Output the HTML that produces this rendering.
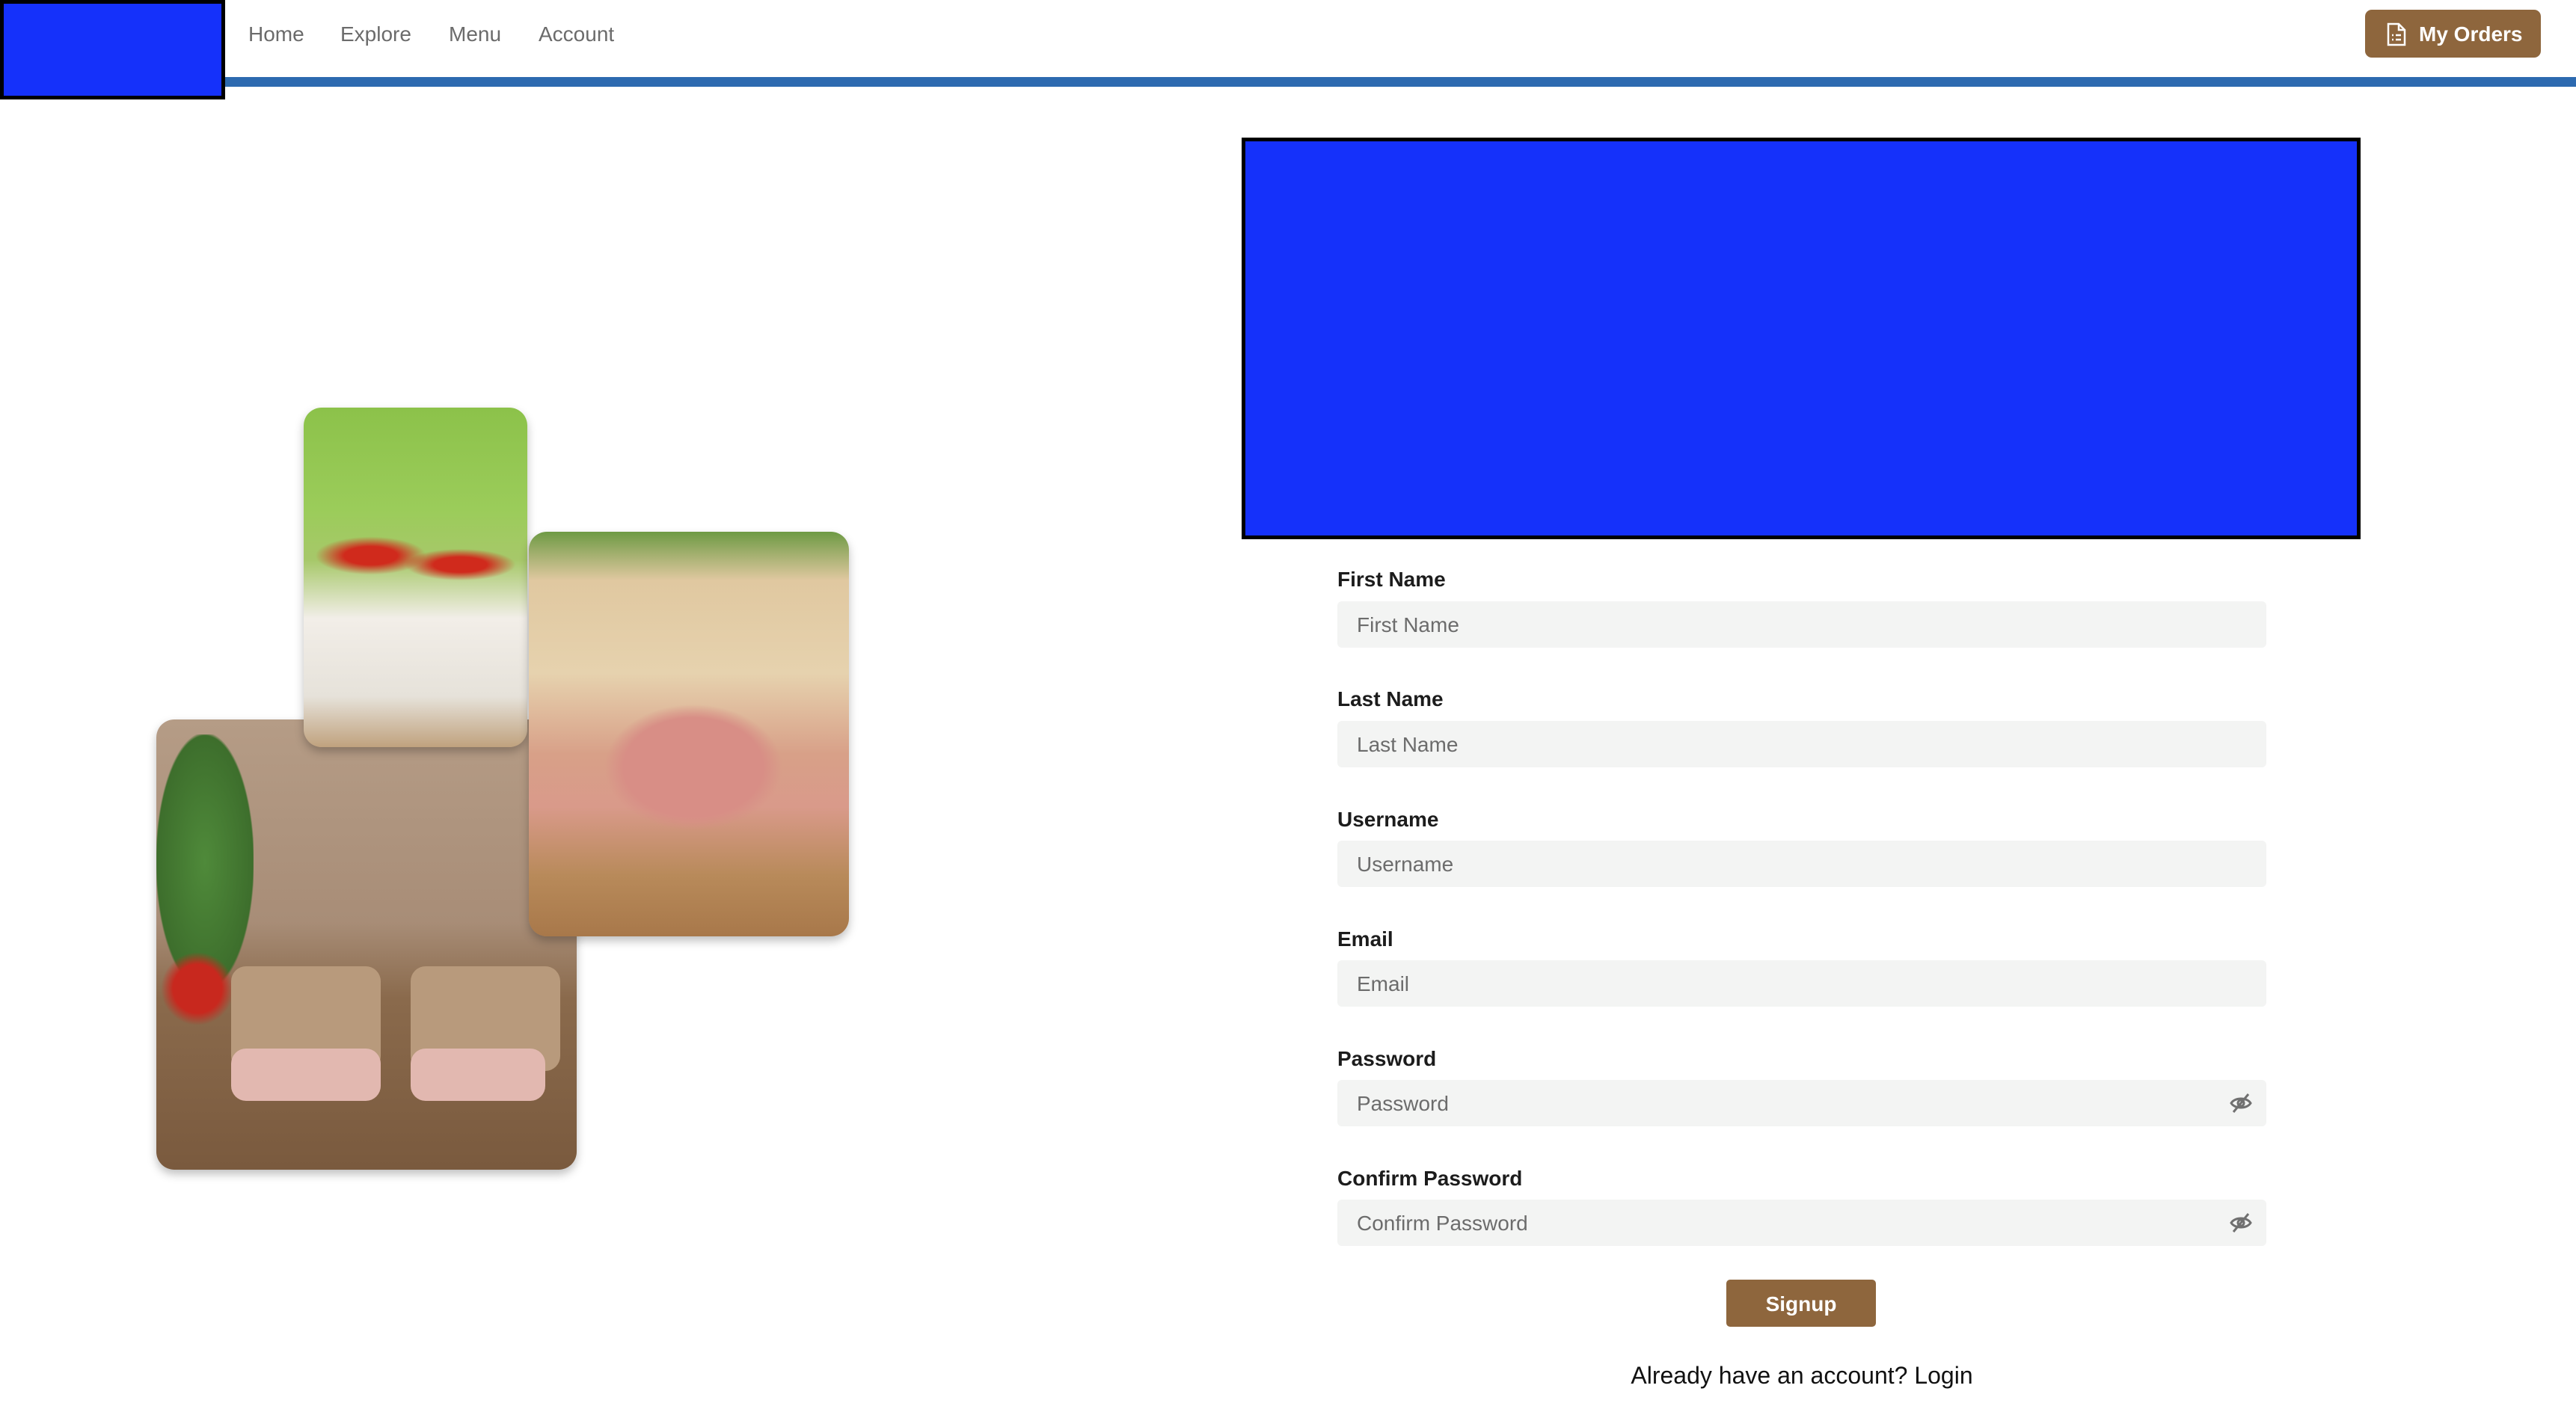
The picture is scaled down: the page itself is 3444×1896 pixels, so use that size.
<!DOCTYPE html>
<html><head><meta charset="utf-8"><style>
*{margin:0;padding:0;box-sizing:border-box}
body{width:3444px;height:1896px;background:#fff;font-family:"Liberation Sans",sans-serif;position:relative;overflow:hidden}
.a{position:absolute}
.nav{font-size:28px;color:#6b6b6b;top:30px}
.lbl{position:absolute;left:1788px;font-size:28px;font-weight:bold;color:#1c1c1c}
.inp{position:absolute;left:1788px;width:1242px;height:62px;background:#f3f4f3;border-radius:6px;font-size:28px;color:#6c6c6c;padding-left:26px;line-height:64px}
.img{position:absolute;border-radius:24px;overflow:hidden;box-shadow:0 6px 12px rgba(0,0,0,.25)}
.eye{position:absolute;right:18px;top:17px}
</style></head><body>
<div class="a" style="left:0;top:0;width:301px;height:133px;background:#1531fa;border:5px solid #000"></div>
<div class="a" style="left:301px;top:103px;width:3143px;height:13px;background:#2d6ab0"></div>
<div class="a nav" style="left:332px">Home</div>
<div class="a nav" style="left:455px">Explore</div>
<div class="a nav" style="left:600px">Menu</div>
<div class="a nav" style="left:720px">Account</div>
<div class="a" style="left:3162px;top:13px;width:235px;height:64px;background:#8e663d;border-radius:9px;color:#fff;font-size:28px;font-weight:bold;line-height:66px;padding-left:72px">
<svg class="a" style="left:28px;top:17px" width="28" height="32" viewBox="0 0 28 32" fill="none" stroke="#fff" stroke-width="2.5"><path d="M3 2h14l8 8v20H3z"/><path d="M17 2v8h8"/><path d="M8 17h2M13 17h7M8 23h2M13 23h7"/></svg>My Orders</div>
<div class="a" style="left:1660px;top:184px;width:1496px;height:537px;background:#1531fa;border:5px solid #000"></div>

<div class="img" style="left:209px;top:962px;width:562px;height:602px;background:linear-gradient(180deg,#b59c86 0%,#a88d77 45%,#8a6a4c 62%,#7a5a3e 100%)">
<div class="a" style="left:0;top:20px;width:130px;height:340px;background:radial-gradient(ellipse at 50% 50%,#4f8a3a,#3d6e2c 70%,transparent 72%)"></div>
<div class="a" style="left:0;top:300px;width:110px;height:120px;background:radial-gradient(circle,#c8281e 40%,transparent 60%)"></div>
<div class="a" style="left:100px;top:330px;width:200px;height:140px;background:#b89a7c;border-radius:20px"></div>
<div class="a" style="left:340px;top:330px;width:200px;height:140px;background:#b89a7c;border-radius:20px"></div>
<div class="a" style="left:100px;top:440px;width:200px;height:70px;background:#e2b8b0;border-radius:20px"></div>
<div class="a" style="left:340px;top:440px;width:180px;height:70px;background:#e2b8b0;border-radius:20px"></div>
</div>
<div class="img" style="left:406px;top:545px;width:299px;height:454px;background:linear-gradient(180deg,#8cc24a 0%,#9bcc5a 30%,#a7c86a 45%,#f2eee8 62%,#e6e2da 85%,#c0a27e 100%)">
<div class="a" style="left:0;top:150px;width:299px;height:120px;background:radial-gradient(ellipse at 30% 40%,#d02a1c 12%,transparent 25%),radial-gradient(ellipse at 70% 50%,#d02a1c 12%,transparent 25%)"></div>
</div>
<div class="img" style="left:707px;top:711px;width:428px;height:541px;background:linear-gradient(180deg,#6e9a44 0%,#e0c8a0 12%,#e6d2ae 35%,#d8a088 55%,#d99a8a 68%,#b88a5a 85%,#a8784a 100%)">
<div class="a" style="left:100px;top:230px;width:240px;height:170px;background:radial-gradient(ellipse,#d88e86 55%,transparent 70%)"></div>
</div>

<div class="lbl" style="top:759px">First Name</div>
<div class="inp" style="top:804px">First Name</div>
<div class="lbl" style="top:919px">Last Name</div>
<div class="inp" style="top:964px">Last Name</div>
<div class="lbl" style="top:1080px">Username</div>
<div class="inp" style="top:1124px">Username</div>
<div class="lbl" style="top:1240px">Email</div>
<div class="inp" style="top:1284px">Email</div>
<div class="lbl" style="top:1400px">Password</div>
<div class="inp" style="top:1444px">Password<svg class="eye" width="32" height="28" viewBox="0 0 32 28" fill="none" stroke="#707070" stroke-width="3"><path d="M3 14C8 6 24 6 29 14C24 22 8 22 3 14Z"/><circle cx="16" cy="14" r="4"/><path d="M26 2L6 26"/></svg></div>
<div class="lbl" style="top:1560px">Confirm Password</div>
<div class="inp" style="top:1604px">Confirm Password<svg class="eye" width="32" height="28" viewBox="0 0 32 28" fill="none" stroke="#707070" stroke-width="3"><path d="M3 14C8 6 24 6 29 14C24 22 8 22 3 14Z"/><circle cx="16" cy="14" r="4"/><path d="M26 2L6 26"/></svg></div>
<div class="a" style="left:2308px;top:1711px;width:200px;height:63px;background:#8e663d;border-radius:5px;color:#fff;font-size:28px;font-weight:bold;text-align:center;line-height:65px">Signup</div>
<div class="a" style="left:1900px;top:1821px;width:1018px;text-align:center;font-size:32px;color:#111">Already have an account? Login</div>
</body></html>
